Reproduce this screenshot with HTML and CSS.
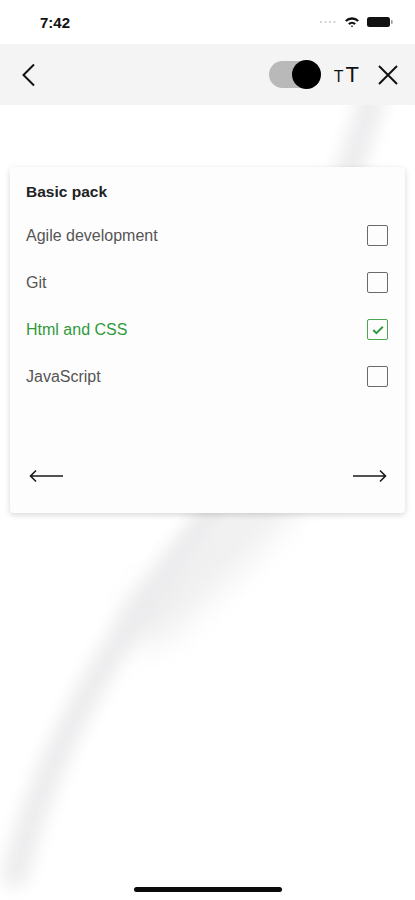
FILE: index.html
```html
<!DOCTYPE html>
<html>
<head>
    <title>Basic pack</title>
    <link rel="stylesheet" href="styles.css">
</head>
<body>
    <div class="screen">
        <!-- soft streak behind the content -->
        <svg class="streak" width="415" height="900" viewBox="0 0 415 900">
            <defs>
                <filter id="soft" x="-50%" y="-50%" width="200%" height="200%">
                    <feGaussianBlur stdDeviation="9"/>
                </filter>
                <filter id="softer" x="-50%" y="-50%" width="200%" height="200%">
                    <feGaussianBlur stdDeviation="16"/>
                </filter>
            </defs>
            <path d="M 290 470 C 260 520, 200 570, 150 620" fill="none" stroke="#efeff0" stroke-width="50" stroke-linecap="round" filter="url(#softer)"/>
            <path d="M 372 100 C 330 230, 270 420, 210 515 C 150 600, 60 700, 15 875" fill="none" stroke="#ebeaec" stroke-width="24" stroke-linecap="round" filter="url(#soft)"/>
        </svg>

        <div class="status-bar">
            <span class="time">7:42</span>
            <div class="status-icons">
                <svg width="18" height="6" viewBox="0 0 18 6">
                    <circle cx="2" cy="3" r="1" fill="#c8c8c8"/>
                    <circle cx="6.5" cy="3" r="1" fill="#c8c8c8"/>
                    <circle cx="11" cy="3" r="1" fill="#c8c8c8"/>
                    <circle cx="15.5" cy="3" r="1" fill="#c8c8c8"/>
                </svg>
                <svg width="16" height="12" viewBox="0 0 16 12">
                    <path d="M1 4.2 A10 10 0 0 1 15 4.2 L13.4 5.8 A7.8 7.8 0 0 0 2.6 5.8 Z" fill="#111"/>
                    <path d="M4.1 7.3 A5.6 5.6 0 0 1 11.9 7.3 L10.3 8.9 A3.4 3.4 0 0 0 5.7 8.9 Z" fill="#111"/>
                    <path d="M6.8 10 A1.7 1.7 0 0 1 9.2 10 L8 11.3 Z" fill="#111"/>
                </svg>
                <svg width="26" height="12" viewBox="0 0 26 12">
                    <rect x="0" y="1" width="23" height="10" rx="2.5" fill="#111"/>
                    <rect x="24" y="4" width="1.6" height="4" rx="0.8" fill="#999"/>
                </svg>
            </div>
        </div>

        <div class="nav-bar">
            <svg class="back" width="16" height="24" viewBox="0 0 16 24">
                <path d="M13 1.5 L2.5 12 L13 22.5" fill="none" stroke="#111" stroke-width="2"/>
            </svg>
            <div class="nav-actions">
                <div class="toggle">
                    <span class="knob"></span>
                </div>
                <div class="text-size"><span class="small-t">T</span><span class="big-t">T</span></div>
                <svg width="22" height="22" viewBox="0 0 22 22">
                    <path d="M2 2 L20 20 M20 2 L2 20" stroke="#111" stroke-width="2"/>
                </svg>
            </div>
        </div>

        <div class="content">
            <div class="card">
                <div class="card-title">Basic pack</div>
                <div class="list">
                    <div class="row">
                        <span>Agile development</span>
                        <span class="box"></span>
                    </div>
                    <div class="row">
                        <span>Git</span>
                        <span class="box"></span>
                    </div>
                    <div class="row checked">
                        <span>Html and CSS</span>
                        <span class="box">
                            <svg width="14" height="14" viewBox="0 0 14 14">
                                <path d="M2.2 7 L5.4 10.2 L11.8 3.8" fill="none" stroke="#2f9a3a" stroke-width="2"/>
                            </svg>
                        </span>
                    </div>
                    <div class="row">
                        <span>JavaScript</span>
                        <span class="box"></span>
                    </div>
                </div>
                <div class="card-footer">
                    <svg width="35" height="14" viewBox="0 0 35 14">
                        <path d="M34 7 L1.5 7 M7 1.5 L1.5 7 L7 12.5" fill="none" stroke="#1a1a1a" stroke-width="1.6"/>
                    </svg>
                    <svg width="35" height="14" viewBox="0 0 35 14">
                        <path d="M1 7 L33.5 7 M28 1.5 L33.5 7 L28 12.5" fill="none" stroke="#1a1a1a" stroke-width="1.6"/>
                    </svg>
                </div>
            </div>
        </div>

        <div class="home-indicator"></div>
    </div>
</body>
</html>
```

FILE: styles.css
```css
body {
    margin: 0;
    background-color: #ffffff;
    font-family: "Liberation Sans", Arial, sans-serif;
}

.screen {
    position: relative;
    width: 415px;
    height: 900px;
    display: flex;
    flex-direction: column;
    overflow: hidden;
}

.streak {
    position: absolute;
    left: 0;
    top: 0;
    z-index: 0;
}

.status-bar,
.nav-bar,
.content,
.home-indicator {
    position: relative;
    z-index: 1;
}

.status-bar {
    height: 44px;
    display: flex;
    align-items: center;
    justify-content: space-between;
    padding: 0 22px 0 40px;
    background-color: #ffffff;
}

.time {
    font-size: 15px;
    font-weight: bold;
    color: #111;
}

.status-icons {
    display: flex;
    align-items: center;
    gap: 7px;
}

.nav-bar {
    height: 61px;
    display: flex;
    align-items: center;
    justify-content: space-between;
    padding: 0 16px 0 21px;
    background-color: #f4f4f4;
}

.nav-actions {
    display: flex;
    align-items: center;
}

.toggle {
    width: 50px;
    height: 27px;
    border-radius: 14px;
    background-color: #b9b9b9;
    display: flex;
    align-items: center;
    justify-content: flex-end;
    margin-right: 15px;
}

.knob {
    width: 29px;
    height: 29px;
    border-radius: 50%;
    background-color: #000;
    margin-right: -2px;
}

.text-size {
    color: #111;
    margin-right: 18px;
    line-height: 1;
}

.small-t {
    font-size: 16px;
    margin-right: 2px;
}

.big-t {
    font-size: 22px;
}

.content {
    padding: 62px 10px 0;
}

.card {
    background-color: #fefdfe;
    border-radius: 4px;
    box-shadow: 0 2px 6px rgba(0, 0, 0, 0.16);
    padding: 13px 17px 25px 16px;
}

.card-title {
    height: 24px;
    line-height: 24px;
    font-size: 15.5px;
    font-weight: bold;
    color: #222;
}

.list {
    margin-top: 8px;
}

.row {
    height: 47px;
    display: flex;
    align-items: center;
    justify-content: space-between;
    font-size: 16px;
    color: #555;
}

.row.checked {
    color: #2f9a3a;
}

.box {
    width: 19px;
    height: 19px;
    border: 1.5px solid #6a6a6a;
    border-radius: 2px;
    display: flex;
    align-items: center;
    justify-content: center;
}

.row.checked .box {
    border-color: #4aa64f;
}

.card-footer {
    margin-top: 64px;
    height: 24px;
    display: flex;
    align-items: center;
    justify-content: space-between;
    padding: 0 1px 0 3px;
}

.home-indicator {
    width: 148px;
    height: 5px;
    border-radius: 3px;
    background-color: #0a0a0a;
    margin: auto auto 8px;
}
```
